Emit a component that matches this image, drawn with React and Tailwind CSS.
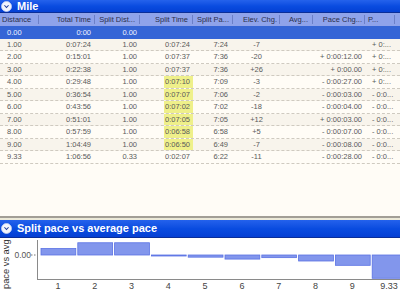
import React from 'react';

const cols = ['w-[39px]', 'w-[56px]', 'w-[45px]', 'w-[53px]', 'w-[40px]', 'w-[47px]', 'w-[33px]', 'w-[52px]', 'w-[30px]', 'w-[5px]'];

const headers = [
  { label: 'Distance', cls: 'justify-start pl-[2px]' },
  { label: 'Total Time', cls: 'justify-end pr-[3px]' },
  { label: 'Split Dist...', cls: 'justify-end pr-[4px]' },
  { label: 'Split Time', cls: 'justify-end pr-[4px]' },
  { label: 'Split Pa...', cls: 'justify-end pr-[3px]' },
  { label: 'Elev. Chg.', cls: 'justify-end pr-[2px]' },
  { label: 'Avg...', cls: 'justify-end pr-[4px]' },
  { label: 'Pace Chg...', cls: 'justify-end pr-[2px]' },
  { label: 'P...', cls: 'justify-start pl-[3px]' },
  { label: '', cls: '' },
];

const rows = [
  { d: '1.00', t: '0:07:24', sd: '1.00', st: '0:07:24', sp: '7:24', el: '-7', pc: '', p: '+ 0:...' },
  { d: '2.00', t: '0:15:01', sd: '1.00', st: '0:07:37', sp: '7:36', el: '-20', pc: '+ 0:00:12.00', p: '+ 0:...' },
  { d: '3.00', t: '0:22:38', sd: '1.00', st: '0:07:37', sp: '7:36', el: '+26', pc: '+ 0:00.00', p: '+ 0:...' },
  { d: '4.00', t: '0:29:48', sd: '1.00', st: '0:07:10', sp: '7:09', el: '-3', pc: '- 0:00:27.00', p: '+ 0:...', hl: true },
  { d: '5.00', t: '0:36:54', sd: '1.00', st: '0:07:07', sp: '7:06', el: '-2', pc: '- 0:00:03.00', p: '- 0:0...', hl: true },
  { d: '6.00', t: '0:43:56', sd: '1.00', st: '0:07:02', sp: '7:02', el: '-18', pc: '- 0:00:04.00', p: '- 0:0...', hl: true },
  { d: '7.00', t: '0:51:01', sd: '1.00', st: '0:07:05', sp: '7:05', el: '+12', pc: '+ 0:00:03.00', p: '- 0:0...', hl: true },
  { d: '8.00', t: '0:57:59', sd: '1.00', st: '0:06:58', sp: '6:58', el: '+5', pc: '- 0:00:07.00', p: '- 0:0...', hl: true },
  { d: '9.00', t: '1:04:49', sd: '1.00', st: '0:06:50', sp: '6:49', el: '-7', pc: '- 0:00:08.00', p: '- 0:0...', hl: true },
  { d: '9.33', t: '1:06:56', sd: '0.33', st: '0:02:07', sp: '6:22', el: '-11', pc: '- 0:00:28.00', p: '- 0:0...' },
];

// seconds vs average pace, positive = slower
const diffs = [13.5, 25.5, 25.5, -1.5, -4.5, -8.5, -5.5, -12.5, -21.5, -48.5];
const labels = ['1', '2', '3', '4', '5', '6', '7', '8', '9', '9.33'];

function CollapseIcon() {
  return (
    <svg width="11" height="11" viewBox="0 0 11 11" className="shrink-0">
      <circle cx="5.5" cy="5.5" r="5" fill="#f4f6fc" stroke="#c8d2f0" strokeWidth="0.8" />
      <path d="M2.8 4.2 L5.5 7.2 L8.2 4.2 L7 4.2 L5.5 5.8 L4 4.2 Z" fill="#1e3c9c" />
    </svg>
  );
}

function TitleBar({ title, h }) {
  return (
    <div className={`${h} flex items-center gap-[5px] pl-[1px] bg-linear-to-b from-[#2462ec] via-[#0a4ce0] to-[#0540d4] border-b border-[#0a2e98]`}>
      <CollapseIcon />
      <span className="text-white font-bold text-[11px] leading-none">{title}</span>
    </div>
  );
}

function Chart() {
  const zero = 17;
  const scale = 0.48;
  const step = 36.8;
  const x0 = 40.5;
  const ff = 'Liberation Sans, Arial, sans-serif';
  return (
    <svg width="400" height="53" viewBox="0 0 400 53" className="block bg-white">
      <text x="9" y="51" transform="rotate(-90 9 51)" fontSize="9.3" fill="#333" fontFamily={ff}>pace vs avg</text>
      <text x="31" y="20" textAnchor="end" fontSize="8.5" fill="#555" fontFamily={ff}>0.00</text>
      <line x1="31" y1={zero} x2="37" y2={zero} stroke="#777" strokeDasharray="1.5 1.5" />
      {diffs.map((v, i) => {
        const h = Math.max(1, Math.abs(v) * scale);
        const y = v > 0 ? zero - h : zero;
        return (
          <rect key={i} x={x0 + i * step + 0.5} y={y} width={step - 2} height={h} fill="#8296ec" stroke="#5a72e4" strokeWidth="0.8" />
        );
      })}
      <line x1="37.5" y1="2" x2="37.5" y2="41" stroke="#8a8a8a" />
      <line x1="37" y1="41.5" x2="400" y2="41.5" stroke="#8a8a8a" />
      {labels.map((l, i) => (
        <text key={l} x={x0 + i * step + step / 2 - 1} y="51" textAnchor="middle" fontSize="9" fill="#444" fontFamily={ff}>{l}</text>
      ))}
    </svg>
  );
}

export default function App() {
  return (
    <div className="w-[400px] h-[291px] overflow-hidden flex flex-col bg-[#fffcf6] font-['Liberation_Sans',Arial,sans-serif]">
      <TitleBar title="Mile" h="h-[13px]" />

      {/* header */}
      <div className="flex h-[13px] bg-[#8fa3ea] text-[7.5px] text-[#2a2e4a]">
        {headers.map((hd, i) => (
          <div key={i} className={`${cols[i]} flex items-center shrink-0`}>
            <div className={`flex-1 flex ${hd.cls} whitespace-nowrap overflow-hidden`}>{hd.label}</div>
            {i < 9 && <span className="w-px h-[9px] bg-[#6c80c8] shrink-0" />}
          </div>
        ))}
      </div>

      {/* selected row */}
      <div className="flex h-[12.5px] items-center bg-[#3565d6] text-[7.5px] text-[#eef2ff]">
        <div className="w-[39px] pl-[7px]">0.00</div>
        <div className="w-[56px] text-right pr-[4px]">0:00</div>
        <div className="w-[45px] text-right pr-[3px]">0.00</div>
      </div>

      {rows.map((r, i) => (
        <div
          key={r.d}
          className={`flex h-[12.5px] items-stretch text-[7.5px] text-[#5a5a5a] border-b border-dashed border-[#cfcac0] ${i % 2 === 0 ? 'bg-[#f8f4ec]' : 'bg-[#fffcf6]'}`}
        >
          <div className="w-[39px] flex items-center pl-[7px]">{r.d}</div>
          <div className="w-[56px] flex items-center justify-end pr-[4px]">{r.t}</div>
          <div className="w-[45px] flex items-center justify-end pr-[3px]">{r.sd}</div>
          <div className="w-[53px] flex justify-end">
            <span className={`flex items-center pl-[1px] pr-[3px] ${r.hl ? 'bg-[#eff08a]' : ''}`}>{r.st}</span>
          </div>
          <div className="w-[40px] flex items-center justify-end pr-[5px]">{r.sp}</div>
          <div className="w-[47px] flex items-center justify-center">{r.el}</div>
          <div className="w-[33px]" />
          <div className="w-[52px] flex items-center justify-end pr-[3px]">{r.pc}</div>
          <div className="w-[30px] flex items-center pl-[7px] whitespace-nowrap">{r.p}</div>
        </div>
      ))}

      <div className="flex-1" />

      <div className="h-[2px] bg-[#a29e96]" />
      <div className="h-[2px] bg-[#ece9d8]" />
      <TitleBar title="Split pace vs average pace" h="h-[18px]" />
      <Chart />
    </div>
  );
}
